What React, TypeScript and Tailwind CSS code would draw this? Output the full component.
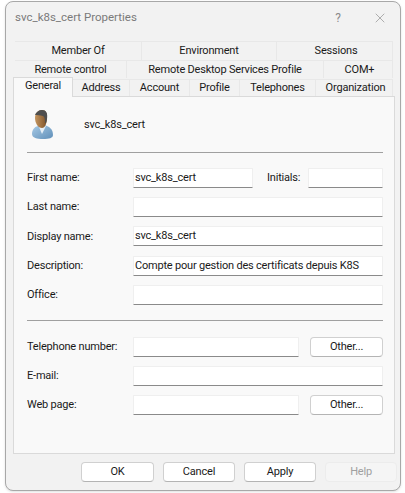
import { X } from 'lucide-react';

const TEXT = 'text-[11px] tracking-[-0.2px] text-[#1a1a1a] whitespace-nowrap';

const ROW_ONE = [
  { label: 'Member Of', width: 'w-[127px]' },
  { label: 'Environment', width: 'w-[135px]' },
  { label: 'Sessions', width: 'w-[116px]' },
];

const ROW_TWO = [
  { label: 'Remote control', width: 'w-[112px]' },
  { label: 'Remote Desktop Services Profile', width: 'w-[197px]' },
  { label: 'COM+', width: 'w-[69px]' },
];

const ROW_THREE = [
  { label: 'Address', width: 'w-[57px]' },
  { label: 'Account', width: 'w-[60px]' },
  { label: 'Profile', width: 'w-[50px]' },
  { label: 'Telephones', width: 'w-[76px]' },
  { label: 'Organization', width: 'w-[77px]' },
];

function BackTab({ label, width, height }: { label: string; width: string; height: string }) {
  return (
    <div className={`${width} ${height} ${TEXT} flex items-center justify-center border-t border-r border-[#e8e8e8] bg-[#f2f2f2] last:pl-[3px]`}>
      {label}
    </div>
  );
}

function Field({ value, width }: { value?: string; width: string }) {
  return (
    <div className={`${width} ${TEXT} h-[20px] shrink-0 flex items-center pl-[1px] bg-white border border-[#efefef] border-b-[#8a8a8a] rounded-[1px]`}>
      {value}
    </div>
  );
}

function Row({ label, value, gap = 'mb-[9px]', labelClass = '' }: { label: string; value?: string; gap?: string; labelClass?: string }) {
  return (
    <div className={`flex items-center ${gap}`}>
      <span className={`w-[106px] shrink-0 ${TEXT} ${labelClass}`}>{label}</span>
      <Field value={value} width="w-[250px]" />
    </div>
  );
}

function Button({ label, disabled, width }: { label: string; disabled?: boolean; width: string }) {
  return (
    <div
      className={`${width} h-[20px] flex items-center justify-center rounded-[4px] border text-[11px] tracking-[-0.2px] ${
        disabled
          ? 'border-[#ececec] bg-[#f5f5f5] text-[#a0a0a0]'
          : 'border-[#d0d0d0] border-b-[#b4b4b4] bg-white text-[#1a1a1a]'
      }`}
    >
      {label}
    </div>
  );
}

function UserIcon() {
  return (
    <svg width="22" height="30" viewBox="0 0 22 30" className="shrink-0">
      <defs>
        <linearGradient id="face" x1="0" y1="0" x2="1" y2="0">
          <stop offset="0" stopColor="#c4955f" />
          <stop offset="1" stopColor="#7d5229" />
        </linearGradient>
        <linearGradient id="shirt" x1="0" y1="0" x2="1" y2="1">
          <stop offset="0" stopColor="#a9cbe6" />
          <stop offset="1" stopColor="#5f8fb9" />
        </linearGradient>
      </defs>
      <path d="M0 24c0-4 2-7 6-8l6-1c5 1 9 4 9 10 0 3-4 4-10 4S0 28 0 24z" fill="url(#shirt)" />
      <path d="M7 17l3 7 4-8z" fill="#e6eff7" />
      <path d="M3 8c0-5 3-8 7-8 4 0 5 3 5 8 0 5-2 10-5 10-4 0-7-5-7-10z" fill="url(#face)" />
      <path d="M3 5c1-3 4-5 7-5 4 0 6 3 5 9l-1 4-1 0c0-3 0-6-2-7-3-1-6-1-8-1z" fill="#4f4f4f" />
    </svg>
  );
}

export default function App() {
  return (
    <div className="w-[405px] h-[493px] bg-white pt-[1px] pl-[5px] font-['Roboto',sans-serif]">
      <div className="w-[396px] h-[490px] flex flex-col rounded-[8px] border border-[#a8a8a8] bg-[#f2f2f2] shadow-sm">
        {/* Title bar */}
        <div className="h-[39px] shrink-0 flex items-start justify-between pt-[7px] pl-[9px] pr-[12px]">
          <span className="text-[11.5px] text-[#7a7a7a]">svc_k8s_cert Properties</span>
          <div className="flex items-center gap-[31px] text-[#8a8a8a]">
            <span className="text-[12px]">?</span>
            <X size={16} strokeWidth={1} />
          </div>
        </div>

        {/* Tabs */}
        <div className="pl-[9px] flex flex-col">
          <div className="flex">
            {ROW_ONE.map((t) => (
              <BackTab key={t.label} label={t.label} width={t.width} height="h-[19px] pt-[1px]" />
            ))}
          </div>
          <div className="flex">
            {ROW_TWO.map((t) => (
              <BackTab key={t.label} label={t.label} width={t.width} height="h-[18px] pt-[1px]" />
            ))}
          </div>
        </div>
        <div className="relative z-10 flex items-end pl-[7px] -mt-[2px] h-[20px]">
          <div className={`w-[60px] h-[20px] -mb-[1px] pb-[2px] flex items-center justify-center bg-[#f9f9f9] border border-b-0 border-[#dadada] ${TEXT}`}>
            General
          </div>
          {ROW_THREE.map((t) => (
            <BackTab key={t.label} label={t.label} width={t.width} height="h-[17px]" />
          ))}
        </div>

        {/* Panel */}
        <div className="ml-[7px] w-[382px] h-[358px] shrink-0 flex flex-col border border-[#dadada] bg-[#f9f9f9] pl-[13px] pr-[11px]">
          <div className="flex items-center h-[55px] shrink-0">
            <div className="ml-[5px] w-[52px] shrink-0">
              <UserIcon />
            </div>
            <span className={`${TEXT} pt-[2px]`}>svc_k8s_cert</span>
          </div>
          <div className="h-px bg-[#a0a0a0] mb-[15px]" />

          <div className="flex items-center mb-[9px]">
            <span className={`w-[106px] shrink-0 ${TEXT}`}>First name:</span>
            <Field value="svc_k8s_cert" width="w-[120px]" />
            <span className={`w-[55px] pl-[14px] shrink-0 ${TEXT}`}>Initials:</span>
            <Field width="w-[75px]" />
          </div>
          <Row label="Last name:" />
          <Row label="Display name:" value="svc_k8s_cert" gap="mb-[10px]" labelClass="pt-[2px]" />
          <Row label="Description:" value="Compte pour gestion des certificats depuis K8S" />
          <Row label="Office:" gap="mb-[15px]" />
          <div className="h-px bg-[#a0a0a0] mb-[16px]" />

          <div className="flex items-center mb-[9px]">
            <span className={`w-[106px] shrink-0 ${TEXT}`}>Telephone number:</span>
            <Field width="w-[166px]" />
            <div className="ml-[11px]">
              <Button label="Other..." width="w-[73px]" />
            </div>
          </div>
          <Row label="E-mail:" labelClass="pt-[1px]" />
          <div className="flex items-center">
            <span className={`w-[106px] shrink-0 pt-[1px] ${TEXT}`}>Web page:</span>
            <Field width="w-[166px]" />
            <div className="ml-[11px]">
              <Button label="Other..." width="w-[73px]" />
            </div>
          </div>
        </div>

        {/* Footer buttons */}
        <div className="flex pl-[75px] gap-[9px] mt-[8px]">
          <Button label="OK" width="w-[73px]" />
          <Button label="Cancel" width="w-[72px]" />
          <Button label="Apply" width="w-[72px]" />
          <Button label="Help" width="w-[72px]" disabled />
        </div>
      </div>
    </div>
  );
}
